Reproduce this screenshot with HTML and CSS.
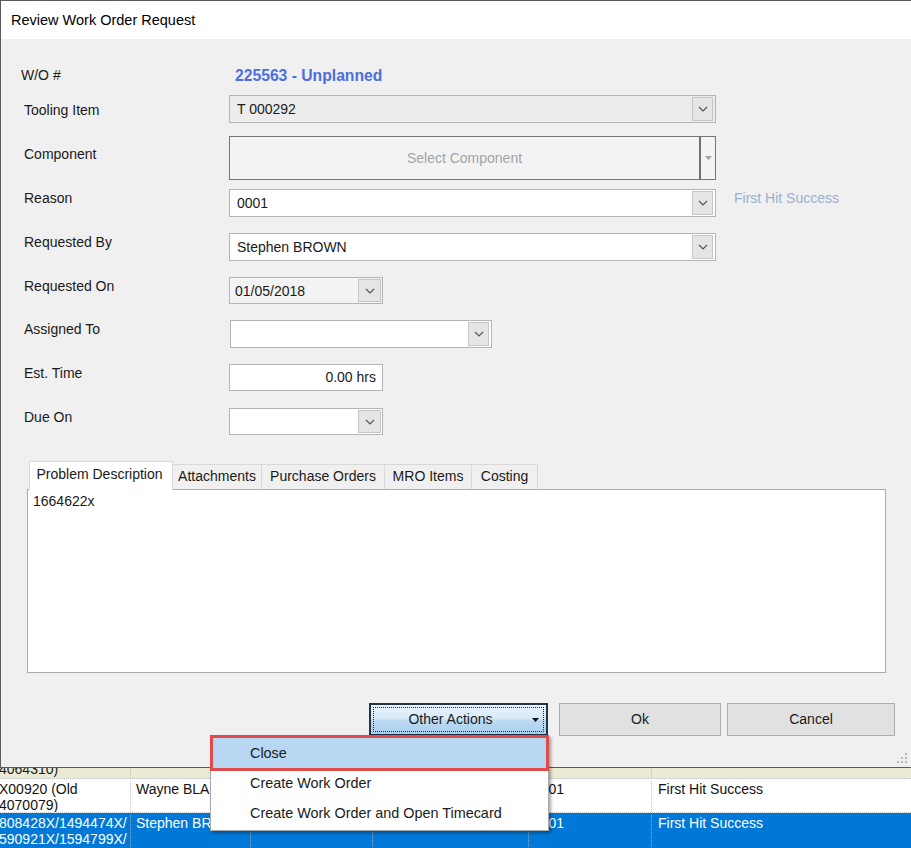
FILE: index.html
```html
<!DOCTYPE html>
<html>
<head>
<meta charset="utf-8">
<title>Review Work Order Request</title>
<link rel="stylesheet" href="styles.css">
</head>
<body>
<div class="screen">
  <div class="window">
    <div class="titlebar">Review Work Order Request</div>
    <div class="client">
      <div class="form">
        <div class="row r-wo">
          <div class="label label-wo">W/O #</div>
          <div class="wo-value">225563 - Unplanned</div>
        </div>
        <div class="row r-tool">
          <div class="label">Tooling Item</div>
          <div class="combo w-wide combo-disabled">
            <span class="combo-text">T 000292</span>
            <span class="ddbtn"><svg width="10" height="6" viewBox="0 0 10 6"><path d="M1 1l4 4 4-4" fill="none" stroke="#555" stroke-width="1.2"/></svg></span>
          </div>
        </div>
        <div class="row r-comp">
          <div class="label">Component</div>
          <div class="splitbtn">
            <span class="split-main">Select Component</span>
            <span class="split-arrow"><svg width="7" height="4" viewBox="0 0 7 4"><path d="M0 0h7L3.5 4z" fill="#a0a0a0"/></svg></span>
          </div>
        </div>
        <div class="row r-std">
          <div class="label">Reason</div>
          <div class="combo w-wide">
            <span class="combo-text">0001</span>
            <span class="ddbtn"><svg width="10" height="6" viewBox="0 0 10 6"><path d="M1 1l4 4 4-4" fill="none" stroke="#555" stroke-width="1.2"/></svg></span>
          </div>
          <div class="hint">First Hit Success</div>
        </div>
        <div class="row r-std">
          <div class="label">Requested By</div>
          <div class="combo w-wide">
            <span class="combo-text">Stephen BROWN</span>
            <span class="ddbtn"><svg width="10" height="6" viewBox="0 0 10 6"><path d="M1 1l4 4 4-4" fill="none" stroke="#555" stroke-width="1.2"/></svg></span>
          </div>
        </div>
        <div class="row r-reqon">
          <div class="label">Requested On</div>
          <div class="combo w-date combo-date-disabled">
            <span class="combo-text date-text">01/05/2018</span>
            <span class="ddbtn dd-date"><svg width="10" height="6" viewBox="0 0 10 6"><path d="M1 1l4 4 4-4" fill="none" stroke="#555" stroke-width="1.2"/></svg></span>
          </div>
        </div>
        <div class="row r-std">
          <div class="label">Assigned To</div>
          <div class="combo w-assign">
            <span class="combo-text"></span>
            <span class="ddbtn"><svg width="10" height="6" viewBox="0 0 10 6"><path d="M1 1l4 4 4-4" fill="none" stroke="#555" stroke-width="1.2"/></svg></span>
          </div>
        </div>
        <div class="row r-std">
          <div class="label">Est. Time</div>
          <div class="textbox">0.00 hrs</div>
        </div>
        <div class="row r-std">
          <div class="label">Due On</div>
          <div class="combo w-date">
            <span class="combo-text date-text"></span>
            <span class="ddbtn dd-date"><svg width="10" height="6" viewBox="0 0 10 6"><path d="M1 1l4 4 4-4" fill="none" stroke="#555" stroke-width="1.2"/></svg></span>
          </div>
        </div>
      </div>

      <div class="tabs">
        <div class="tab active t1">Problem Description</div>
        <div class="tab t2">Attachments</div>
        <div class="tab t3">Purchase Orders</div>
        <div class="tab t4">MRO Items</div>
        <div class="tab t5">Costing</div>
      </div>
      <div class="panel">1664622x</div>

      <div class="actions">
        <div class="btn-other">
          <div class="focus">
            <span class="other-text">Other Actions</span>
            <span class="other-arrow"><svg width="7" height="4" viewBox="0 0 7 4"><path d="M0 0h7L3.5 4z" fill="#111"/></svg></span>
          </div>
        </div>
        <div class="btn btn-ok">Ok</div>
        <div class="btn btn-cancel">Cancel</div>
      </div>
    </div>
    <svg class="grip" width="12" height="12" viewBox="0 0 12 12">
      <rect x="9" y="1" width="2" height="2" fill="#b4b4b4"/>
      <rect x="5" y="5" width="2" height="2" fill="#b4b4b4"/>
      <rect x="9" y="5" width="2" height="2" fill="#b4b4b4"/>
      <rect x="1" y="9" width="2" height="2" fill="#b4b4b4"/>
      <rect x="5" y="9" width="2" height="2" fill="#b4b4b4"/>
      <rect x="9" y="9" width="2" height="2" fill="#b4b4b4"/>
    </svg>
  </div>

  <div class="grid">
    <div class="grow g-partial">
      <div class="gcell c1"><div class="shift">4064310)</div></div>
      <div class="gcell c2"></div>
      <div class="gcell c3"></div>
      <div class="gcell c4"></div>
      <div class="gcell c5"></div>
      <div class="gcell c6"></div>
    </div>
    <div class="grow g-white">
      <div class="gcell c1"><div class="c1text">X00920 (Old<br>4070079)</div></div>
      <div class="gcell c2">Wayne BLACK</div>
      <div class="gcell c3"></div>
      <div class="gcell c4"></div>
      <div class="gcell c5">0001</div>
      <div class="gcell c6">First Hit Success</div>
    </div>
    <div class="grow g-sel">
      <div class="gcell c1"><div class="c1text">808428X/1494474X/<br>590921X/1594799X/<br>600795X/1594800X/</div></div>
      <div class="gcell c2">Stephen BROWN</div>
      <div class="gcell c3"></div>
      <div class="gcell c4"></div>
      <div class="gcell c5">0001</div>
      <div class="gcell c6">First Hit Success</div>
    </div>
  </div>

  <div class="menu">
    <div class="mi hl">Close</div>
    <div class="mi">Create Work Order</div>
    <div class="mi">Create Work Order and Open Timecard</div>
  </div>
</div>
</body>
</html>
```

FILE: styles.css
```css
* { box-sizing: border-box; }
html, body { margin: 0; padding: 0; }
body {
  font-family: "Liberation Sans", Arial, sans-serif;
  font-size: 14px;
  color: #1a1a1a;
  background: #ffffff;
}
.screen {
  position: relative;
  width: 911px;
  height: 848px;
  overflow: hidden;
}

/* window */
.window {
  position: relative;
  height: 768px;
  display: flex;
  flex-direction: column;
  border-top: 1px solid #5b5b5b;
  border-left: 1px solid #5b5b5b;
  border-bottom: 1px solid #5b5b5b;
}
.titlebar {
  height: 38px;
  flex: none;
  background: #ffffff;
  line-height: 38px;
  padding-left: 10px;
  font-size: 14.5px;
  color: #000;
}
.client {
  flex: 1;
  background: #f0f0f0;
  padding-top: 23px;
}
.grip {
  position: absolute;
  right: 3px;
  bottom: 3px;
}

/* form */
.form { padding-left: 23px; }
.row { display: flex; align-items: flex-start; }
.label {
  width: 205px;
  flex: none;
  line-height: 18px;
  color: #1a1a1a;
}
.r-wo { height: 33px; }
.label-wo {
  margin-left: -3px;
  width: 214px;
  padding-top: 4px;
}
.wo-value {
  padding-top: 5px;
  line-height: 18px;
  font-weight: bold;
  font-size: 15.7px;
  color: #4b6fdf;
}
.r-tool { height: 41px; }
.r-tool .label { padding-top: 6px; }
.r-comp { height: 53px; }
.r-comp .label { padding-top: 9px; }
.r-std { height: 44px; }
.r-reqon { height: 43px; }

.combo {
  display: flex;
  align-items: center;
  height: 28px;
  border: 1px solid #b4b4b4;
  background: #ffffff;
}
.combo-disabled { background: #ececec; }
.combo-date-disabled { background: #f3f3f3; }
.combo-text {
  flex: 1;
  padding-left: 7px;
  line-height: 18px;
  white-space: nowrap;
}
.date-text { padding-left: 5px; }
.w-wide { width: 487px; }
.w-date { width: 154px; height: 27px; }
.w-assign { width: 262px; margin-left: 1px; }
.ddbtn {
  flex: none;
  width: 21px;
  height: 24px;
  margin-right: 2px;
  border: 1px solid #c6c6c6;
  background: #e5e5e5;
  display: flex;
  align-items: center;
  justify-content: center;
}
.dd-date {
  width: 23px;
  height: 23px;
  margin-right: 1px;
}
.hint {
  margin-left: 18px;
  line-height: 18px;
  color: #9aafd2;
}
.textbox {
  width: 154px;
  height: 27px;
  border: 1px solid #b4b4b4;
  background: #ffffff;
  text-align: right;
  padding-right: 6px;
  line-height: 25px;
}

.splitbtn {
  display: flex;
  width: 487px;
  height: 44px;
  border: 1px solid #767676;
  background: #f3f3f3;
}
.split-main {
  flex: 1;
  text-align: center;
  line-height: 42px;
  color: #a3a3a3;
}
.split-arrow {
  width: 16px;
  flex: none;
  border-left: 2px solid #707070;
  display: flex;
  align-items: center;
  justify-content: center;
}

/* tabs */
.tabs {
  position: relative;
  z-index: 1;
  display: flex;
  align-items: flex-end;
  height: 28px;
  margin: 9px 0 0 28px;
}
.tab {
  height: 25px;
  padding-top: 2px;
  line-height: 18px;
  text-align: center;
  white-space: nowrap;
  background: #f0f0f0;
  border-top: 1px solid #d9d9d9;
  border-right: 1px solid #d9d9d9;
}
.tab.active {
  height: 29px;
  margin-bottom: -1px;
  padding-top: 3px;
  padding-right: 3px;
  background: #ffffff;
  border-left: 1px solid #d9d9d9;
}
.t1 { width: 144px; }
.t2 { width: 89px; }
.t3 { width: 123px; }
.t4 { width: 87px; }
.t5 { width: 66px; }
.panel {
  margin-left: 26px;
  width: 859px;
  height: 184px;
  border: 1px solid #ababab;
  background: #ffffff;
  padding: 2px 5px;
  line-height: 18px;
}

/* action buttons */
.actions {
  display: flex;
  height: 33px;
  margin: 30px 0 0 368px;
}
.btn-other {
  width: 179px;
  height: 33px;
  border: 2px solid #22364a;
  padding: 2px;
  background: linear-gradient(to bottom, #e9f3fc 0%, #d8eaf9 45%, #bcdaf2 55%, #a9cfee 100%);
}
.focus {
  height: 100%;
  display: flex;
  align-items: center;
  border: 1px dotted #2a2a2a;
}
.other-text {
  flex: 1;
  text-align: center;
  line-height: 18px;
  margin-top: -2px;
}
.other-arrow {
  width: 16px;
  flex: none;
  display: flex;
  align-items: center;
  justify-content: center;
}
.btn {
  height: 33px;
  border: 1px solid #adadad;
  background: #e1e1e1;
  line-height: 31px;
  text-align: center;
}
.btn-ok { width: 162px; margin-left: 11px; }
.btn-cancel { width: 168px; margin-left: 6px; }

/* background grid */
.grid { background: #ffffff; }
.grow { display: flex; }
.gcell {
  flex: none;
  overflow: hidden;
  white-space: nowrap;
  line-height: 16px;
  border-right: 1px dotted #c4c4c4;
}
.c1 { width: 131px; }
.c2 { width: 120px; padding-left: 5px; }
.c3 { width: 122px; }
.c4 { width: 156px; }
.c5 { width: 123px; padding-left: 4px; }
.c6 { flex: 1; border-right: none; padding-left: 6px; }
.g-partial {
  height: 11px;
  background: #ebebd4;
  overflow: hidden;
  border-bottom: 1px dotted #c4c4c4;
}
.shift { margin-top: -7px; margin-left: -1px; }
.g-white {
  height: 34px;
  padding-top: 2px;
  border-bottom: 1px dotted #c4c4c4;
  color: #111;
}
.c1text { margin-left: -1px; }
.g-sel {
  height: 40px;
  padding-top: 2px;
  background: #0078d7;
  color: #ffffff;
}
.g-sel .gcell { border-right-color: rgba(255, 255, 255, 0.45); }
.g-sel .c6 { border-right: none; }

/* context menu */
.menu {
  position: absolute;
  left: 210px;
  top: 735px;
  width: 339px;
  padding: 2px;
  border: 1px solid #a8a8a8;
  background: #ffffff;
  box-shadow: 2px 2px 3px rgba(0, 0, 0, 0.35);
  z-index: 5;
}
.mi {
  height: 30px;
  line-height: 30px;
  padding-left: 37px;
  font-size: 14.4px;
  color: #1a1a1a;
  white-space: nowrap;
}
.mi.hl {
  background: #b8d7f2;
  outline: 3px solid #e04c4c;
}
```
